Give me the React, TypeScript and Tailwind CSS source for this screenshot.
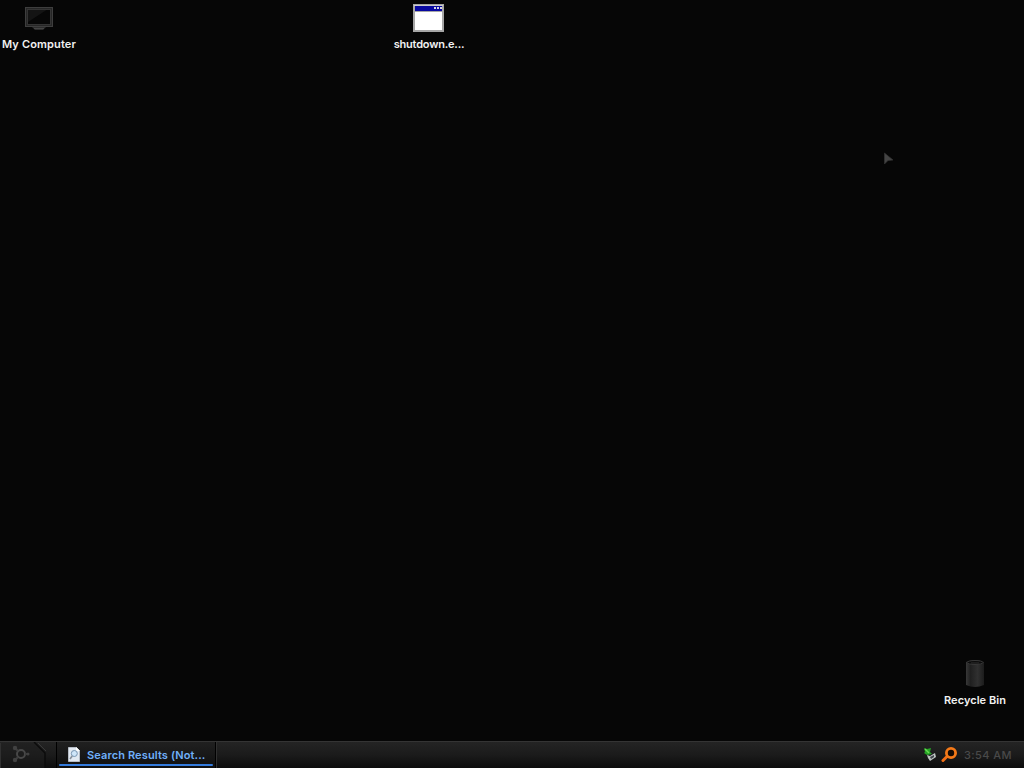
import type { ReactNode } from 'react'

interface DesktopIconProps {
  label:     string
  className: string
  children:  ReactNode
}

function DesktopIcon({ label, className, children }: DesktopIconProps) {
  return (
    <div className={`absolute flex flex-col items-center ${className}`}>
      {children}
      <span className="text-[11px] leading-4 font-semibold whitespace-nowrap text-[#f2f2f2]">{label}</span>
    </div>
  )
}

function MonitorIcon() {
  return (
    <svg width="32" height="32" viewBox="0 0 32 32">
      <path d="M9 25h14l-3 3h-8z" fill="#2c2c2c" />
      <path d="M11 26.5h10" stroke="#444" />
      <rect x="2.5" y="5.5" width="27" height="19" fill="#262626" stroke="#3e3e3e" />
      <rect x="5" y="7" width="22" height="15" fill="#070707" />
      <path d="M5 7h20L5 20z" fill="#141414" />
      <rect x="4.5" y="7.5" width="23" height="15" fill="none" stroke="#343434" />
    </svg>
  )
}

function WindowIcon() {
  return (
    <svg width="32" height="32" viewBox="0 0 32 32" shapeRendering="crispEdges">
      <rect y="2" width="31" height="28" fill="#a6a6a6" />
      <rect x="1" y="3" width="29" height="1" fill="#ccc" />
      <rect x="2" y="4" width="27" height="5" fill="#0808a0" />
      <rect x="2" y="10" width="27" height="18" fill="#fff" />
      <path d="M21 5h2v2h-2zM24 5h2v2h-2zM27 5h2v2h-2z" fill="#d8d8e4" />
    </svg>
  )
}

function BinIcon() {
  return (
    <svg width="32" height="32" viewBox="0 0 32 32">
      <defs>
        <linearGradient id="bin">
          <stop stopColor="#383838" />
          <stop offset=".25" stopColor="#202020" />
          <stop offset=".65" stopColor="#303030" />
          <stop offset="1" stopColor="#1c1c1c" />
        </linearGradient>
      </defs>
      <path d="M7 5q9-4 18 0v23q-9 4-18 0z" fill="url(#bin)" />
      <ellipse cx="16" cy="5.5" rx="8" ry="2" fill="#0c0c0c" stroke="#383838" />
      <path d="M12 6h8" stroke="#303030" />
    </svg>
  )
}

function StartButton() {
  return (
    <div className="h-full w-[57px] border-r border-black">
      <svg width="56" height="27" viewBox="0 0 56 27" fill="none">
        <path d="M0 1h35l10 10v16H0z" fill="#202020" fillOpacity=".45" />
        <path d="M34 0l11 11v16" stroke="#0b0b0b" strokeWidth="1.5" />
        <path d="M38 1l8 8" stroke="#393939" />
        <path d="M.5 1v26" stroke="#303030" />
        <circle cx="21" cy="12" r="4" stroke="#484848" strokeWidth="2" />
        <path d="M18 9l-3-3M18 15l-3 3M25 12h3" stroke="#3c3c3c" strokeWidth="2" />
        <circle cx="15" cy="6" r="2.2" fill="#414141" />
        <circle cx="15" cy="18" r="2.2" fill="#414141" />
        <circle cx="28" cy="12" r="1.5" fill="#414141" />
      </svg>
    </div>
  )
}

function SearchPageIcon() {
  return (
    <svg width="12" height="15" viewBox="0 0 12 15" fill="none">
      <path d="M.5.5h8l3 3v11H.5z" fill="#e2e9f2" stroke="#b5bcc6" />
      <path d="M8 0v4h4" fill="#fff" />
      <circle cx="6.3" cy="6.5" r="3" fill="#cfe6fa" stroke="#7895b2" />
      <path d="M4.2 9L2 12" stroke="#87909c" strokeWidth="1.6" />
    </svg>
  )
}

function SafelyRemoveIcon() {
  return (
    <svg width="16" height="16" viewBox="0 0 16 16">
      <path d="M2 1l3 1 4-1-1 4 2 2-5 1-3-2 1-1z" fill="#26a326" />
      <path d="M3 2l4 4" stroke="#69dc51" strokeWidth="1.5" />
      <path d="M5 8l3 1 5-3 1 4-6 4-2-3z" fill="#bcc2c0" />
      <path d="M8 10l4-2v2l-3 2z" fill="#41454b" />
    </svg>
  )
}

function MagnifierIcon() {
  return (
    <svg width="17" height="17" viewBox="0 0 17 17" fill="none">
      <path d="M6 9.5L2 13.5" stroke="#f36f16" strokeWidth="3" strokeLinecap="round" />
      <circle cx="10" cy="6" r="4.6" fill="#160b04" stroke="#f47918" strokeWidth="2.8" />
    </svg>
  )
}

function Taskbar() {
  return (
    <footer className="flex h-[27px] shrink-0 items-stretch border-t border-[#343434] bg-linear-to-b from-[#242424] via-[#1b1b1b] to-[#0c0c0c]">
      <StartButton />
      <div className="flex w-[159px] flex-col border-r border-black bg-linear-to-b from-[#202020] to-[#101010] px-0.5">
        <div className="flex flex-1 items-center gap-[7px] pt-0.5 pl-[9px]">
          <SearchPageIcon />
          <span className="pt-0.5 text-[11px] leading-4 font-semibold tracking-[0.12px] whitespace-nowrap text-[#70b0fa]">
            Search Results (Not...
          </span>
        </div>
        <div className="mb-0.5 h-0.5 rounded-full bg-[#347bdc]" />
      </div>
      <div className="flex flex-1 items-center justify-end border-l border-[#303030] pr-3">
        <SafelyRemoveIcon />
        <div className="ml-[3px]"><MagnifierIcon /></div>
        <span className="ml-1.5 w-[48px] text-[11px] leading-4 font-medium tracking-[0.4px] whitespace-nowrap text-[#494949]">3:54 AM</span>
      </div>
    </footer>
  )
}

export default function App() {
  return (
    <div className="flex h-screen w-full flex-col overflow-hidden bg-[#060606] font-['Inter',sans-serif] select-none">
      <main className="relative flex-1">
        <DesktopIcon label="My Computer" className="top-0.5 left-0 w-[78px] gap-0.5 tracking-[0.15px]">
          <MonitorIcon />
        </DesktopIcon>
        <DesktopIcon label="shutdown.e..." className="top-0.5 left-[390px] w-[78px] gap-0.5 tracking-[-0.2px]">
          <WindowIcon />
        </DesktopIcon>
        <DesktopIcon label="Recycle Bin" className="top-[657px] left-[936px] w-[78px] gap-[3px] tracking-[0.05px]">
          <BinIcon />
        </DesktopIcon>
        <svg className="absolute top-[152px] left-[884px]" width="10" height="13" viewBox="0 0 10 13">
          <path d="M.5 1l8.5 7-5 .5L.5 12z" fill="#444" stroke="#333" strokeWidth=".7" />
        </svg>
      </main>
      <Taskbar />
    </div>
  )
}
